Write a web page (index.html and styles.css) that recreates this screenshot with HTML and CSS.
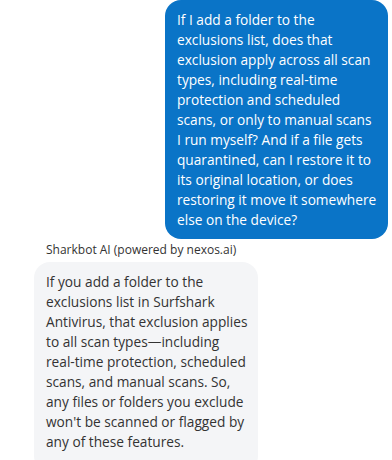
FILE: index.html
```html
<!DOCTYPE html>
<html lang="en">
<head>
  <meta charset="UTF-8">
  <meta name="viewport" content="width=device-width, initial-scale=1.0">
  <title>Sharkbot AI</title>
  <link rel="stylesheet" href="styles.css">
</head>
<body>
  <div class="chat">
    <!-- user message -->
    <div class="message user">
      <div class="bubble">If I add a folder to the exclusions list, does that exclusion apply across all scan types, including real-time protection and scheduled scans, or only to manual scans I run myself? And if a file gets quarantined, can I restore it to its original location, or does restoring it move it somewhere else on the device?</div>
    </div>

    <!-- bot reply -->
    <div class="message bot">
      <div class="sender">Sharkbot AI (powered by nexos.ai)</div>
      <div class="bubble">If you add a folder to the exclusions list in Surfshark Antivirus, that exclusion applies to all scan types—including real-time protection, scheduled scans, and manual scans. So, any files or folders you exclude won't be scanned or flagged by any of these features.</div>
    </div>
  </div>
</body>
</html>
```

FILE: styles.css
```css
* {
  box-sizing: border-box;
  font-family: "Open Sans", sans-serif;
}

body {
  margin: 0;
  padding: 0;
  background-color: #ffffff;
  overflow: hidden;
}

.chat {
  display: flex;
  flex-direction: column;
}

.message {
  display: flex;
  flex-direction: column;
}

.bubble {
  font-size: 13.7px;
  line-height: 20px;
  border-radius: 16px;
}

/* user message */
.message.user {
  align-items: flex-end;
  padding-right: 4px;
}

.message.user .bubble {
  width: 223px;
  background-color: #0a74c7;
  color: #ffffff;
  padding: 10px 11px 9px 12px;
}

/* bot message */
.message.bot {
  align-items: flex-start;
  padding-left: 34px;
  margin-top: 3px;
}

.sender {
  font-size: 12px;
  line-height: 16px;
  color: #333333;
  padding-left: 12px;
  margin-bottom: 4px;
}

.message.bot .bubble {
  width: 224px;
  background-color: #f4f5f7;
  color: #333333;
  padding: 10px 8px 20px 12px;
}
```
